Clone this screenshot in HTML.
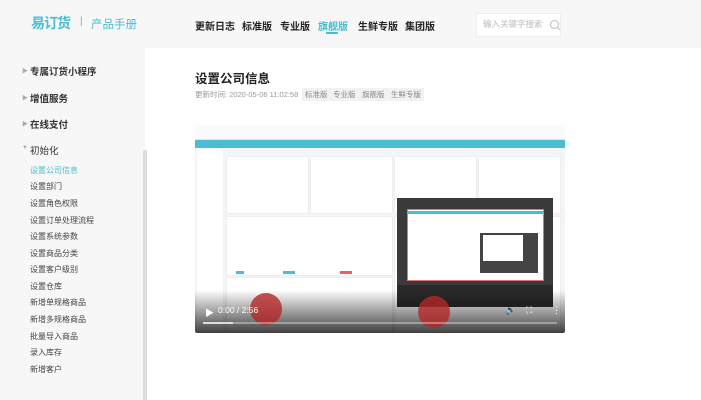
<!DOCTYPE html>
<html><head><meta charset="utf-8"><style>
*{margin:0;padding:0;box-sizing:border-box}
body{width:701px;height:400px;overflow:hidden;background:#fff;font-family:"Liberation Sans","Noto Sans CJK SC",sans-serif;position:relative}
.a{position:absolute;white-space:nowrap}
.hd{left:0;top:0;width:701px;height:48px;background:#f7f7f7}
.side{left:0;top:48px;width:145px;height:352px;background:#f7f7f7}
.nav{font-size:10px;font-weight:bold;color:#222;top:18px}
.s{font-size:9.5px;font-weight:bold;color:#333;left:30px}
.c{font-size:8px;color:#444;left:30px}
.ar{font-size:6px;color:#aaa;left:22px}
.tag{background:#f2f2f2;color:#888;font-size:7.5px;padding:1px 3px;top:88px}
.card{background:#fff;box-shadow:0 0 1px #ccc}
</style></head><body>
<div class="a hd"></div>
<div class="a side"></div>
<div class="a" style="left:31px;top:13px;font-size:14px;color:#4cbcd0;font-weight:bold;letter-spacing:-1px">易订货</div>
<div class="a" style="left:31px;top:30px;font-size:4px;color:#9dd;letter-spacing:2px">· · · · · · ·</div>
<div class="a" style="left:80px;top:16px;font-size:10px;color:#4cbcd0">|</div>
<div class="a" style="left:91px;top:16px;font-size:11.5px;color:#4cbcd0">产品手册</div>
<div class="a nav" style="left:195px">更新日志</div>
<div class="a nav" style="left:242px">标准版</div>
<div class="a nav" style="left:280px">专业版</div>
<div class="a nav" style="left:318px;color:#4cbcd0">旗舰版</div>
<div class="a" style="left:326px;top:32px;width:12px;height:1.5px;background:#4cbcd0"></div>
<div class="a nav" style="left:358px">生鲜专版</div>
<div class="a nav" style="left:405px">集团版</div>
<div class="a" style="left:476px;top:13px;width:85px;height:24px;background:#fff;border:1px solid #eee"></div>
<div class="a" style="left:483px;top:18px;font-size:8.5px;color:#bbb">输入关键字搜索</div>
<svg class="a" style="left:549px;top:19px" width="12" height="12"><circle cx="5.5" cy="5.5" r="4" fill="none" stroke="#bbb"/><line x1="8.5" y1="8.5" x2="11" y2="11" stroke="#bbb"/></svg>

<div class="a ar" style="top:66px">▶</div><div class="a s" style="top:64px">专属订货小程序</div>
<div class="a ar" style="top:93px">▶</div><div class="a s" style="top:91px">增值服务</div>
<div class="a ar" style="top:119px">▶</div><div class="a s" style="top:117px">在线支付</div>
<div class="a ar" style="top:145px">▼</div><div class="a s" style="top:143px;font-weight:normal">初始化</div>
<div class="a c" style="top:165px;color:#4cbcd0">设置公司信息</div>
<div class="a c" style="top:181px">设置部门</div>
<div class="a c" style="top:198px">设置角色权限</div>
<div class="a c" style="top:215px">设置订单处理流程</div>
<div class="a c" style="top:231px">设置系统参数</div>
<div class="a c" style="top:248px">设置商品分类</div>
<div class="a c" style="top:264px">设置客户级别</div>
<div class="a c" style="top:281px">设置仓库</div>
<div class="a c" style="top:297px">新增单规格商品</div>
<div class="a c" style="top:314px">新增多规格商品</div>
<div class="a c" style="top:331px">批量导入商品</div>
<div class="a c" style="top:347px">录入库存</div>
<div class="a c" style="top:364px">新增客户</div>
<div class="a" style="left:143px;top:150px;width:4px;height:250px;background:#ddd"></div>

<div class="a" style="left:195px;top:68px;font-size:12.5px;font-weight:bold;color:#222">设置公司信息</div>
<div class="a" style="left:195px;top:89px;font-size:7.5px;color:#999">更新时间: 2020-05-06 11:02:58</div>
<div class="a tag" style="left:302px">标准版</div>
<div class="a tag" style="left:330px">专业版</div>
<div class="a tag" style="left:359px">旗舰版</div>
<div class="a tag" style="left:388px">生鲜专版</div>

<div class="a" style="left:195px;top:125px;width:370px;height:208px;background:#f4f5f7;overflow:hidden;border-radius:2px">
 <div class="a" style="left:0;top:0;width:370px;height:15px;background:#fafafa;border-bottom:1px solid #e5e5e5"></div>
 <div class="a" style="left:0;top:15px;width:370px;height:8px;background:#4cbcd0"></div>
 <div class="a" style="left:2px;top:24px;width:26px;height:184px;background:#fff"></div>
 <div class="a card" style="left:32px;top:32px;width:81px;height:56px"></div>
 <div class="a card" style="left:116px;top:32px;width:81px;height:56px"></div>
 <div class="a card" style="left:200px;top:32px;width:81px;height:56px"></div>
 <div class="a card" style="left:284px;top:32px;width:81px;height:56px"></div>
 <div class="a card" style="left:32px;top:92px;width:165px;height:58px"></div>
 <div class="a" style="left:41px;top:146px;width:8px;height:3px;background:#4cbcd0"></div>
 <div class="a" style="left:88px;top:146px;width:12px;height:3px;background:#4cbcd0"></div>
 <div class="a" style="left:145px;top:146px;width:12px;height:3px;background:#d66"></div>
 <div class="a card" style="left:32px;top:153px;width:165px;height:60px"></div>
 <div class="a card" style="left:200px;top:92px;width:165px;height:120px"></div>
 <div class="a" style="left:202px;top:73px;width:156px;height:109px;background:#3a3a3a"></div>
 <div class="a" style="left:212px;top:84px;width:137px;height:72px;background:#fff;border:1px solid #d77"></div>
 <div class="a" style="left:212px;top:86px;width:137px;height:3px;background:#4cbcd0"></div>
 <div class="a" style="left:285px;top:108px;width:58px;height:40px;background:#444"></div>
 <div class="a" style="left:288px;top:110px;width:40px;height:26px;background:#fff"></div>
 <div class="a" style="left:202px;top:160px;width:156px;height:22px;background:#2a2a2a"></div>
 <div class="a" style="left:0;top:165px;width:370px;height:43px;background:linear-gradient(rgba(0,0,0,0),rgba(0,0,0,.75))"></div>
 <div class="a" style="left:55px;top:168px;width:32px;height:32px;border-radius:50%;background:rgba(180,40,40,.8)"></div>
 <div class="a" style="left:223px;top:171px;width:32px;height:32px;border-radius:50%;background:rgba(180,40,40,.8)"></div>
 <div class="a" style="left:10px;top:181px;font-size:9px;color:#fff">▶</div>
 <div class="a" style="left:23px;top:180px;font-size:8.5px;color:#fff">0:00 / 2:56</div>
 <div class="a" style="left:310px;top:180px;font-size:9px;color:#fff">🔈</div>
 <div class="a" style="left:331px;top:180px;font-size:9px;color:#fff">⛶</div>
 <div class="a" style="left:357px;top:180px;font-size:9px;color:#fff">⋮</div>
 <div class="a" style="left:8px;top:197px;width:354px;height:2px;background:rgba(255,255,255,.35)"></div>
 <div class="a" style="left:8px;top:197px;width:30px;height:2px;background:#ddd"></div>
</div>
</body></html>
